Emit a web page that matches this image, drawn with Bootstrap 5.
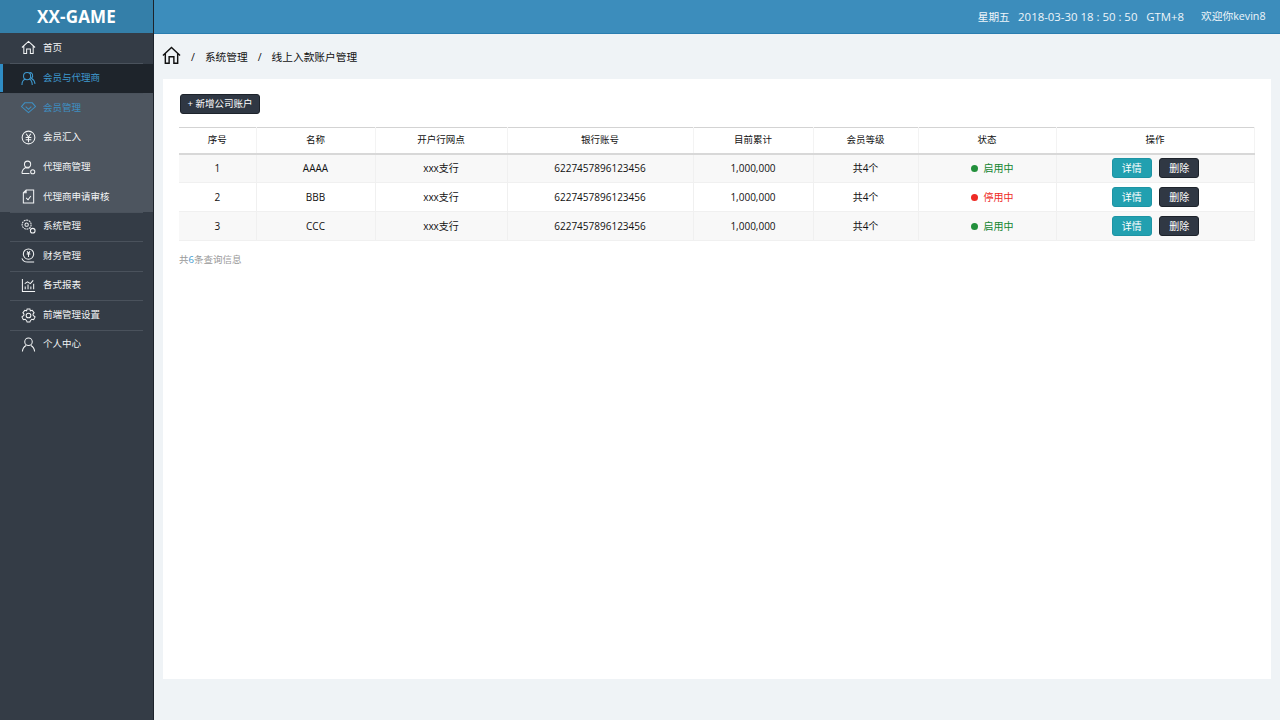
<!DOCTYPE html>
<html lang="zh-CN">
<head>
  <meta charset="UTF-8" />
  <meta name="viewport" content="width=device-width, initial-scale=1" />
  <title>线上入款账户管理</title>
  <link href="https://cdn.jsdelivr.net/npm/bootstrap@5.3.2/dist/css/bootstrap.min.css" rel="stylesheet" />
  <style>
    html, body { height: 100%; overflow: hidden; }
    body { font-family: "Open Sans", "Noto Sans CJK SC", sans-serif; background: #eff3f6; color: #111; }
    .app-side { width: 154px; flex: none; height: 720px; background: #343c46; border-right: 1px solid #1d232b; }
    .side-logo { height: 33px; background: #347fa9; color: #fff; font-size: 17px; font-weight: 700; line-height: 33px; text-align: center; letter-spacing: .2px; }
    .side-item { height: 29.6px; display: flex; align-items: center; padding-left: 21px; gap: 7px; color: #f2f4f5; font-size: 9.5px; position: relative; }
    .side-item svg { width: 15px; height: 15px; flex: none; fill: none; stroke: currentColor; stroke-width: 1.1; }
    .side-line { border-bottom: 1px solid #4a525c; margin: 0 10px -1px; position: relative; }
    .side-sub { background: #4d555f; }
    .side-open { background: #1e242b; color: #3f9ad0; margin-top: 1px; }
    .side-open::before { content: ""; position: absolute; left: 0; top: 0; bottom: 1px; width: 3px; background: #2f8cc4; }
    .side-on { color: #3e8fc2; }
    .side-last { margin-top: -1.500px; }
    .app-top { height: 34px; background: #3c8dbc; border-bottom: 1px solid #2a7db0; color: #eef5fa; font-size: 10.7px; padding-right: 15px; gap: 17px; }
    .top-time { font-size: 11.4px; }
    .crumb-bar { height: 45px; padding: 2px 0 0 8px; font-size: 10.7px; color: #111; gap: 10px; }
    .crumb-bar svg { width: 19px; height: 19px; margin-top: -5px; fill: none; stroke: #111; stroke-width: 1.2; }
    .page-box { background: #fff; margin: 0 10px 0 9px; height: 600px; padding: 15px 16px 0 16px; }
    .add-btn { display: block; margin-left: 1px; font-size: 9.5px; height: 20px; width: 80px; padding: 0; background: #2f3743; border: 1px solid #1d232b; border-radius: 3px; color: #fff; }
    .acct-table { table-layout: fixed; width: 1075px; margin: 13px 0 0 0; font-size: 10px; text-align: center; color: #111; }
    .acct-table th { font-weight: 400; font-size: 9.5px; height: 26px; padding: 0; vertical-align: middle; border-top: 1px solid #d3d3d3; border-bottom: 2px solid #d8d8d8; border-right: 1px solid #f3f3f3; }
    .acct-table td { height: 29px; padding: 0; vertical-align: middle; border-bottom: 1px solid #f0f0f0; border-right: 1px solid #f0f0f0; }
    .acct-table tbody tr:nth-child(odd) td { background: #f8f8f8; }
    .act-btn { font-size: 10px; width: 40px; height: 20px; padding: 0; border-radius: 3px; color: #fff; }
    .act-info { background: #22a0b0; border: 1px solid #1d94a4; margin-right: 5px; }
    .act-del { background: #303844; border: 1px solid #1d232b; }
    .acct-table td.state-on, .acct-table td.state-off { padding-left: 10px; }
    .acct-table td.act-cell { padding-left: 1px; }
    .acct-table td.state-on { color: #12852f; }
    .acct-table td.state-off { color: #ee2a24; }
    .state-dot { display: inline-block; width: 7px; height: 7px; border-radius: 50%; margin-right: 6px; background: currentColor; }
    .dot-green { color: #23903c; }
    .total-note { font-size: 9.5px; color: #999; margin-top: 12px; }
    .total-note b { font-weight: 400; color: #3f9ad0; }
  </style>
</head>
<body>
<div class="d-flex">
  <div class="app-side">
    <div class="side-logo">XX-GAME</div>
    <div class="side-item"><svg viewBox="0 0 16 16"><path d="M1 8 8 1.500 15 8M3 6.500V14.500H6V9.500H10V14.500H13V6.500"/></svg>首页</div>
    <div class="side-line"></div>
    <div class="side-item side-open"><svg viewBox="0 0 16 16"><circle cx="6.500" cy="5.500" r="3.800"/><path d="M1 15c0-4 2-6 4-6.500M12 15c0-4-1-5.500-3-6.500M9 1.800c3-.6 5 3.500 2 6 2 1 3.500 3 4 6"/></svg>会员与代理商</div>
    <div class="side-line"></div>
    <div class="side-sub">
      <div class="side-item side-on"><svg viewBox="0 0 16 16"><path d="M4 3H12L15.500 7 8 13.500.5 7ZM5 7 8 10 11 7"/></svg>会员管理</div>
      <div class="side-item"><svg viewBox="0 0 16 16"><circle cx="8" cy="8" r="6.800"/><path d="M5.500 4 8 7.500 10.500 4M5 8H11M5 10.500H11M8 7.500V13"/></svg>会员汇入</div>
      <div class="side-item"><svg viewBox="0 0 16 16"><circle cx="7" cy="4.500" r="3.300"/><path d="M1 14.500c0-3.500 2-5.500 4-6.500 1 .6 3 .6 4 0M1 14.500H9"/><circle cx="12.500" cy="12.500" r="2.200"/></svg>代理商管理</div>
      <div class="side-item"><svg viewBox="0 0 16 16"><path d="M5.500 1H13.500V15H2.500V4ZM5.500 1V4H2.500M5.500 9.500 7.500 11.500 10.500 7.500"/></svg>代理商申请审核</div>
    </div>
    <div class="side-line"></div>
    <div class="side-item"><svg viewBox="0 0 16 16"><circle cx="6" cy="6" r="4.800" stroke-dasharray="2 .7"/><circle cx="6" cy="6" r="1.800"/><circle cx="12.500" cy="12.500" r="2.500"/></svg>系统管理</div>
    <div class="side-line"></div>
    <div class="side-item"><svg viewBox="0 0 16 16"><circle cx="8" cy="6.500" r="5.500"/><path d="M6.500 3.500 8 6 9.500 3.500M6 6.500H10M8 6V9.500M1 11c1 3 3 4 6 4H14"/></svg>财务管理</div>
    <div class="side-line"></div>
    <div class="side-item"><svg viewBox="0 0 16 16"><path d="M1.500 1V14.500H15M4.500 12V9M7.500 12V7M10.500 12V9M13.500 12V6M4 6 7 4 10 6 13 2.500"/></svg>各式报表</div>
    <div class="side-line"></div>
    <div class="side-item"><svg viewBox="0 0 16 16"><circle cx="8" cy="8" r="2.500"/><path d="M6.500 1H9.500L10 3 12 2.500 14 5 12.800 6.500 13 8 15 9.500 13.500 12.500 11.500 12 10 13.500 9.500 15H6.500L6 13.500 4.500 12 2.500 12.500 1 9.500 3 8 3.200 6.500 2 5 4 2.500 6 3Z"/></svg>前端管理设置</div>
    <div class="side-line"></div>
    <div class="side-item side-last"><svg viewBox="0 0 16 16"><circle cx="8" cy="5" r="4"/><path d="M1.500 15.500c.3-3.500 2-5.500 4-6.500M14.500 15.500c-.3-3.500-2-5.500-4-6.500"/></svg>个人中心</div>
  </div>
  <div class="flex-grow-1">
    <div class="app-top d-flex align-items-center justify-content-end">
      <span>星期五&nbsp;&nbsp;&nbsp;<span class="top-time">2018-03-30 18 : 50 : 50&nbsp;&nbsp;&nbsp;GTM+8</span></span>
      <span>欢迎你kevin8</span>
    </div>
    <div class="crumb-bar d-flex align-items-center">
      <svg viewBox="0 0 16 16"><path d="M.8 8 8 1.200 15.200 8M2.800 6.500V14.500H6V9H10V14.500H13.200V6.500"/></svg>
      <span>/</span><span>系统管理</span>
      <span>/</span><span>线上入款账户管理</span>
    </div>
    <div class="page-box">
      <button type="button" class="btn add-btn">+ 新增公司账户</button>
      <table class="table acct-table">
        <colgroup>
          <col style="width:77px"><col style="width:119px"><col style="width:132px"><col style="width:186px"><col style="width:120px"><col style="width:105px"><col style="width:138px"><col style="width:198px">
        </colgroup>
        <thead>
          <tr><th>序号</th><th>名称</th><th>开户行网点</th><th>银行账号</th><th>目前累计</th><th>会员等级</th><th>状态</th><th>操作</th></tr>
        </thead>
        <tbody>
          <tr><td>1</td><td>AAAA</td><td>xxx支行</td><td>6227457896123456</td><td>1,000,000</td><td>共4个</td><td class="state-on"><span class="state-dot dot-green"></span>启用中</td><td class="act-cell"><button type="button" class="btn act-btn act-info">详情</button> <button type="button" class="btn act-btn act-del">删除</button></td></tr>
          <tr><td>2</td><td>BBB</td><td>xxx支行</td><td>6227457896123456</td><td>1,000,000</td><td>共4个</td><td class="state-off"><span class="state-dot"></span>停用中</td><td class="act-cell"><button type="button" class="btn act-btn act-info">详情</button> <button type="button" class="btn act-btn act-del">删除</button></td></tr>
          <tr><td>3</td><td>CCC</td><td>xxx支行</td><td>6227457896123456</td><td>1,000,000</td><td>共4个</td><td class="state-on"><span class="state-dot dot-green"></span>启用中</td><td class="act-cell"><button type="button" class="btn act-btn act-info">详情</button> <button type="button" class="btn act-btn act-del">删除</button></td></tr>
        </tbody>
      </table>
      <div class="total-note">共<b>6</b>条查询信息</div>
    </div>
  </div>
</div>
<script src="https://cdn.jsdelivr.net/npm/bootstrap@5.3.2/dist/js/bootstrap.bundle.min.js"></script>
</body>
</html>
